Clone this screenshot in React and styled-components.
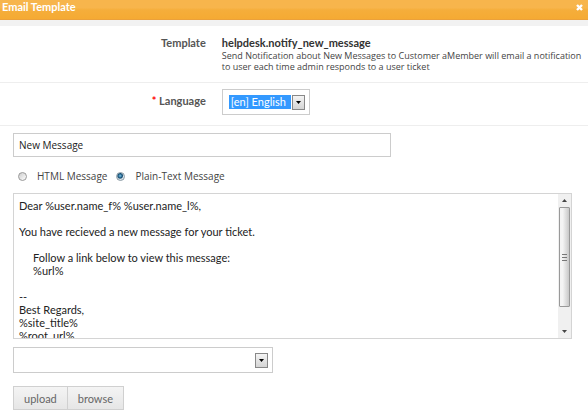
import React, { useState } from "react";
import styled, { createGlobalStyle } from "styled-components";

const MESSAGE = `Dear %user.name_f% %user.name_l%,

You have recieved a new message for your ticket.

     Follow a link below to view this message:
     %url%

--
Best Regards,
%site_title%
%root_url%`;

function ArrowButton() {
  return (
    <Arrow aria-hidden="true">
      <svg width="5" height="3" viewBox="0 0 5 3">
        <path d="M0 0h5L2.5 3z" fill="#000" />
      </svg>
    </Arrow>
  );
}

function App() {
  const [subject, setSubject] = useState("New Message");
  const [format, setFormat] = useState("text");
  const [body, setBody] = useState(MESSAGE);

  return (
    <>
      <GlobalStyle />
      <Header>
        <Title>Email Template</Title>
        <CloseBtn aria-label="Close">
          <svg width="7" height="7" viewBox="0 0 7 7">
            <path d="M1 1l5 5M6 1L1 6" stroke="#fff" strokeWidth="2.4" />
          </svg>
        </CloseBtn>
      </Header>
      <Form onSubmit={(e) => e.preventDefault()}>
        <Row>
          <RowTitle as="div">Template</RowTitle>
          <RowContent>
            <TemplateName>helpdesk.notify_new_message</TemplateName>
            <Comment>
              Send Notification about New Messages to Customer aMember will
              email a notification to user each time admin responds to a user
              ticket
            </Comment>
          </RowContent>
        </Row>
        <Row $compact>
          <RowTitle htmlFor="lang">
            <Required>*</Required> Language
          </RowTitle>
          <RowContent>
            <SelectFrame>
              <Select id="lang" $selected>
                <option>[en] English</option>
              </Select>
              <ArrowButton />
            </SelectFrame>
          </RowContent>
        </Row>
        <Editor>
          <SubjectInput
            aria-label="Subject"
            value={subject}
            onChange={(e) => setSubject(e.target.value)}
          />
          <FormatRow>
            <FormatLabel>
              <Radio
                name="format"
                checked={format === "html"}
                onChange={() => setFormat("html")}
              />
              HTML Message
            </FormatLabel>
            <FormatLabel>
              <Radio
                name="format"
                checked={format === "text"}
                onChange={() => setFormat("text")}
              />
              Plain-Text Message
            </FormatLabel>
          </FormatRow>
          <BodyFrame>
            <BodyText
              aria-label="Message"
              value={body}
              onChange={(e) => setBody(e.target.value)}
            />
            <Scrollbar aria-hidden="true">
              <svg width="5" height="3" viewBox="0 0 5 3">
                <path d="M0 3h5L2.5 0z" fill="#444" />
              </svg>
              <Thumb>
                <svg width="6" height="7" viewBox="0 0 6 7">
                  <path d="M0 .5h5M0 3.5h5M0 6.5h5" stroke="#777" />
                </svg>
              </Thumb>
              <svg width="5" height="3" viewBox="0 0 5 3">
                <path d="M0 0h5L2.5 3z" fill="#444" />
              </svg>
            </Scrollbar>
          </BodyFrame>
          <SelectFrame $wide>
            <Select aria-label="Insert tag">
              <option></option>
            </Select>
            <ArrowButton />
          </SelectFrame>
          <Buttons>
            <FileBtn type="button">upload</FileBtn>
            <FileBtn type="button">browse</FileBtn>
          </Buttons>
        </Editor>
      </Form>
    </>
  );
}

export default App;

const GlobalStyle = createGlobalStyle`
  * {
    box-sizing: border-box;
  }
  body {
    margin: 0;
    background: #fff;
    color: #444;
    font-family: Lato, "Open Sans", sans-serif;
    font-size: 11px;
  }
  svg {
    display: block;
  }
  button, input, select, textarea {
    margin: 0;
    font: inherit;
  }
`;

const Header = styled.header`
  display: flex;
  justify-content: space-between;
  height: 20px;
  padding: 0 5px 0 2px;
  border-bottom: 1px solid #eba13b;
  background: linear-gradient(#f7b54c 40%, #f5ae3b 52%, #f5aa33);
`;

const Title = styled.h1`
  margin: 0;
  color: #fff;
  font-size: 11px;
  font-weight: 700;
  line-height: 14px;
`;

const CloseBtn = styled.button`
  height: 14px;
  padding: 0;
  border: none;
  background: none;
`;

const Form = styled.form`
  border-top: 6px solid #f2f2f2;
`;

const Row = styled.div`
  display: flex;
  gap: 16px;
  padding: ${(props) => (props.$compact ? "6px 0 10px" : "10px 0")};
  border-bottom: 1px solid #eee;
`;

const RowTitle = styled.label`
  width: 35%;
  padding-top: ${(props) => (props.htmlFor ? "5px" : "0")};
  flex-shrink: 0;
  color: #555;
  font-weight: 700;
  line-height: 14px;
  text-align: right;
`;

const Required = styled.span`
  color: #f00;
`;

const RowContent = styled.div`
  flex: 1;
  padding-right: 5px;
`;

const TemplateName = styled.div`
  color: #333;
  font-weight: 700;
  line-height: 14px;
`;

const Comment = styled.div`
  font-family: "Open Sans", sans-serif;
  font-size: 9px;
  line-height: 11px;
`;

const SelectFrame = styled.div`
  display: flex;
  align-items: center;
  width: ${(props) => (props.$wide ? "260px" : "88px")};
  max-width: 100%;
  height: 26px;
  margin-top: ${(props) => (props.$wide ? "8px" : "0")};
  padding: 0 4px 0 6px;
  border: 1px solid #ccc;
`;

const Select = styled.select`
  flex: 1;
  min-width: 0;
  height: 14px;
  padding: 0 2px;
  appearance: none;
  border: none;
  border-radius: 0;
  outline: none;
  background: ${(props) => (props.$selected ? "#3399ff" : "#fff")};
  color: ${(props) => (props.$selected ? "#fff" : "#222")};
  line-height: 14px;
`;

const Arrow = styled.span`
  display: flex;
  align-items: center;
  justify-content: center;
  width: 13px;
  height: 15px;
  margin-left: 1px;
  border: 1px solid #888;
  background: linear-gradient(#f4f4f4, #d4d4d4);
`;

const Editor = styled.div`
  padding: 7px 16px 5px 13px;
`;

const SubjectInput = styled.input`
  display: block;
  width: 378px;
  max-width: 100%;
  height: 24px;
  padding: 0 5px;
  border: 1px solid #ccc;
  color: #222;
  font-family: "Open Sans", sans-serif;
  font-size: 10px;
`;

const FormatRow = styled.div`
  display: flex;
  gap: 9px;
  padding: 12px 5px 9px;
`;

const FormatLabel = styled.label`
  display: flex;
  align-items: center;
  gap: 10px;
  font-family: "Open Sans", sans-serif;
  font-size: 10px;
  line-height: 15px;
`;

const Radio = styled.input.attrs({ type: "radio" })`
  width: 9px;
  height: 9px;
  appearance: none;
  border: 1px solid #999;
  border-radius: 50%;
  background: linear-gradient(135deg, #ccc, #fff);

  &:checked {
    border-color: #8a9aa4;
    background: radial-gradient(circle at 45% 40%, #7cc8ec, #124a70 40%, #dde5ea 60%);
  }
`;

const BodyFrame = styled.div`
  display: flex;
  height: 146px;
  border: 1px solid #d4d4d4;
`;

const BodyText = styled.textarea`
  flex: 1;
  min-width: 0;
  padding: 5px;
  border: none;
  outline: none;
  resize: none;
  background: none;
  color: #222;
  line-height: 13px;
  scrollbar-width: none;
`;

const Scrollbar = styled.div`
  display: flex;
  flex-direction: column;
  align-items: center;
  width: 13px;
  padding: 5px 0;
  background: #f0f0f0;

  > :last-child {
    margin-top: auto;
  }
`;

const Thumb = styled.div`
  display: flex;
  align-items: center;
  justify-content: center;
  width: 11px;
  height: 100px;
  margin-top: 5px;
  border: 1px solid #999;
  border-radius: 1px;
  background: linear-gradient(to right, #f4f4f4 30%, #c8c8c8);
`;

const Buttons = styled.div`
  display: flex;
  margin-top: 13px;
`;

const FileBtn = styled.button`
  height: 24px;
  padding: 0 10px;
  border: 1px solid #d0d0d0;
  background: linear-gradient(#f4f4f4, #e6e6e6);
  color: #666;

  & + & {
    border-left: none;
  }
`;
